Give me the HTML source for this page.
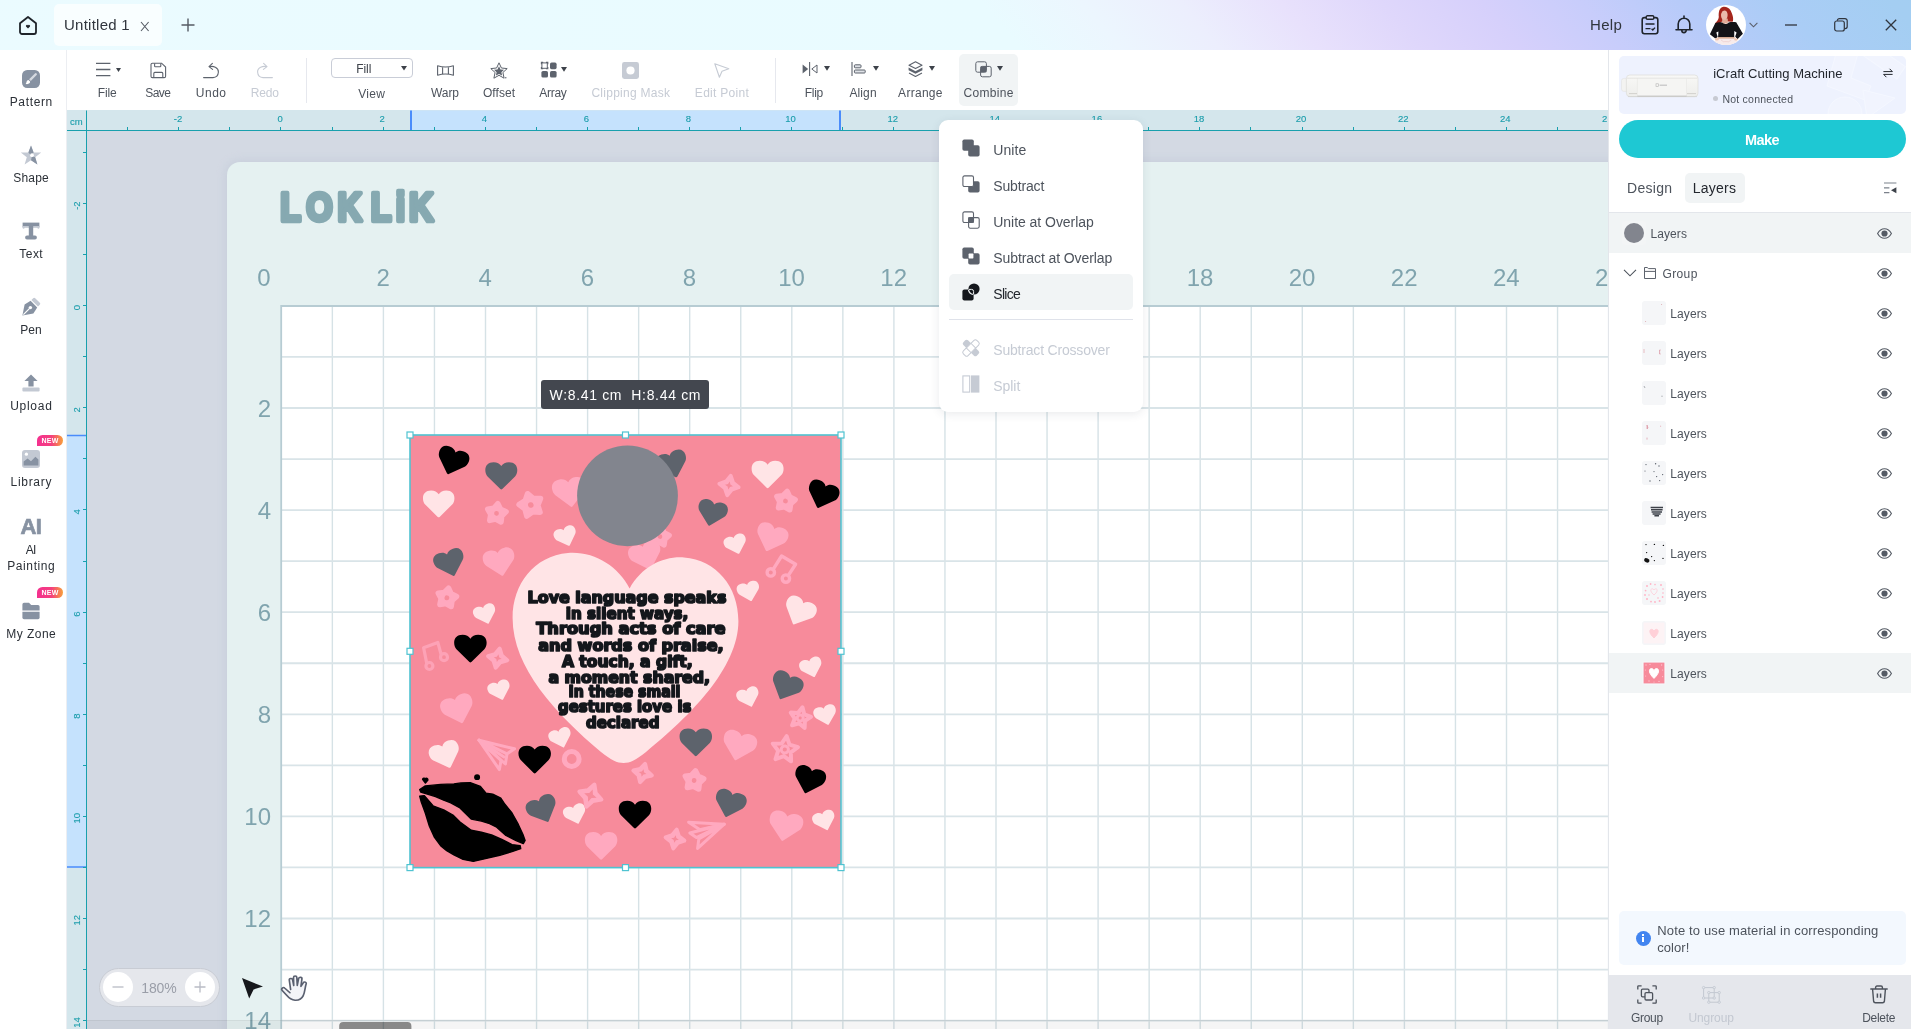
<!DOCTYPE html>
<html lang="en">
<head>
<meta charset="utf-8">
<title>Untitled 1</title>
<style>
*{box-sizing:border-box;margin:0;padding:0}
html,body{width:1911px;height:1029px;overflow:hidden;background:#fff}
body{font-family:"Liberation Sans","DejaVu Sans",sans-serif;color:#4a5059;font-size:13px;position:relative}
#app{position:absolute;left:0;top:0;width:1911px;height:1029px;will-change:transform}
.abs{position:absolute}
svg{display:block;overflow:visible}
/* title bar */
#titlebar{position:absolute;left:0;top:0;width:1911px;height:50px;overflow:hidden;background:#ebfbff}
#tbg{position:absolute;left:-60px;top:0;width:2031px;height:50px;transform:skewX(40deg);background:linear-gradient(90deg,#ebfbff 0px,#e9fbff 1060px,#ecf6fe 1160px,#eceefd 1260px,#e8e1fc 1360px,#dfd7fb 1460px,#d6d0fb 1560px,#c8cdfb 1660px,#b7cbf9 1760px,#aacdf6 1860px,#a4cef2 1971px,#a3cef2 2031px)}
#tab{position:absolute;left:54px;top:4px;width:108px;height:42px;border-radius:5px;background:#f9feff}
.tt{position:absolute;white-space:nowrap;line-height:1}
/* sidebar */
#sidebar{position:absolute;left:0;top:50px;width:67px;height:979px;background:#fff;border-right:1px solid #eceef2}
.sb{position:absolute;left:0;width:62px;text-align:center;font-size:13px;letter-spacing:.45px;color:#2a2f36;line-height:16px;white-space:nowrap}
.new{position:absolute;left:37px;width:26px;height:11px;border-radius:6px 6px 6px 0;background:linear-gradient(90deg,#f4308f 0%,#f4407e 55%,#f7a03a 100%);color:#fff;font-size:7px;font-weight:bold;line-height:11px;text-align:center;letter-spacing:.2px}
/* toolbar */
#toolbar{position:absolute;left:67px;top:50px;width:1541px;height:60px;background:#fff}
.tl{position:absolute;top:85px;transform:translateX(-50%);font-size:13px;line-height:16px;color:#4d535c;white-space:nowrap;letter-spacing:.1px}
.tl.dis{color:#c6cbd4}
.sep{position:absolute;top:58px;width:1px;height:45px;background:#e6e8ee}
/* canvas */
#canvas{position:absolute;left:67px;top:110px;width:1541px;height:919px;background:#d3d9e3;overflow:hidden}
/* right panel */
#panel{position:absolute;left:1608px;top:50px;width:303px;height:979px;background:#fff;border-left:1px solid #e3e6eb}
.row{position:absolute;left:1609px;width:302px;height:40px}
.row.sel{background:#f1f4f5}
.rl{position:absolute;font-size:13px;line-height:16px;color:#4d535c;white-space:nowrap;letter-spacing:.1px}
.thumb{position:absolute;width:24px;height:24px;border-radius:3px;background:#f5f6f8;overflow:hidden}
/* menu */
#menu{position:absolute;left:939px;top:120px;width:204px;height:292px;border-radius:9px;background:#fff;box-shadow:0 2px 10px rgba(40,50,70,.10)}
.mi{position:absolute;left:54px;font-size:14px;line-height:18px;color:#4d535c;white-space:nowrap;letter-spacing:.1px}
.mi.dis{color:#c9cdd6}
</style>
</head>
<body>

<div id="app">
<div id="titlebar">
  <div id="tbg"></div>
  <svg class="abs" style="left:18px;top:15px" width="20" height="21" viewBox="0 0 20 21"><path d="M2 8.2 L10 2 L18 8.2 V17 a2 2 0 0 1 -2 2 H4 a2 2 0 0 1 -2 -2 Z" fill="none" stroke="#1f242b" stroke-width="1.8" stroke-linejoin="round"/><path d="M10 13.4 l-2 -2 a1.1 1.1 0 0 1 2 -1 a1.1 1.1 0 0 1 2 1 Z" fill="#1f242b"/></svg>
  <div id="tab"></div>
  <div class="tt" style="left:64px;top:17px;font-size:15px;color:#30353d;letter-spacing:.25px">Untitled 1</div>
  <svg class="abs" style="left:139.5px;top:20.5px" width="10" height="11" viewBox="0 0 10 11"><path d="M1 1 L8.6 10 M8.6 1 L1 10" stroke="#555b64" stroke-width="1.1" fill="none"/></svg>
  <svg class="abs" style="left:181px;top:18px" width="14" height="14" viewBox="0 0 14 14"><path d="M7 0.5 V13.5 M0.5 7 H13.5" stroke="#555b64" stroke-width="1.4" fill="none"/></svg>
  <div class="tt" style="left:1590px;top:17px;font-size:15px;color:#30353d;letter-spacing:.3px">Help</div>
  <svg class="abs" style="left:1641px;top:15px" width="18" height="20" viewBox="0 0 18 20"><rect x="1.2" y="2.6" width="15.6" height="16.2" rx="2.2" fill="none" stroke="#1f242b" stroke-width="1.6"/><rect x="5.2" y="0.8" width="7.6" height="3.4" rx="1.2" fill="#cfd3fa" stroke="#1f242b" stroke-width="1.4"/><path d="M4.5 9 H13.5 M4.5 13.6 H9.5 M10.6 13.8 l1.2 1.2 l2.2 -2.4" fill="none" stroke="#1f242b" stroke-width="1.4"/></svg>
  <svg class="abs" style="left:1675px;top:15px" width="18" height="20" viewBox="0 0 18 20"><path d="M9 1 V2.6 M3.2 14.6 V9 a5.8 5.8 0 0 1 11.6 0 V14.6 M1 14.8 H17 M6.8 15.2 a2.2 2.4 0 0 0 4.4 0" fill="none" stroke="#1f242b" stroke-width="1.6" stroke-linecap="round" stroke-linejoin="round"/></svg>
  <svg class="abs" style="left:1706px;top:5px" width="40" height="40" viewBox="0 0 40 40"><defs><clipPath id="avc"><circle cx="20" cy="20" r="20"/></clipPath></defs><circle cx="20" cy="20" r="20" fill="#fff"/><g clip-path="url(#avc)"><path d="M17.5 1.8 C13 2.4 12.4 8 12.8 12 C12.6 15 10.6 17 8.7 18.6 L12 19.8 L16 16.4 L22 16.4 L26.6 16.8 C28 14 26.6 9 24.6 5.4 C23 2.8 20.5 1.6 17.5 1.8Z" fill="#a5261c"/><rect x="16.2" y="13.6" width="5.6" height="5" fill="#e3ac98"/><ellipse cx="18.3" cy="10" rx="3.3" ry="4.7" fill="#ebbcab"/><path d="M14.8 9.6 C14.6 5 16.6 3 19 3.2 C22.4 3.6 23.6 7 23 11.4 C22.2 7.6 20.6 5.6 18.8 5.2 C16.6 5.4 15.4 7.2 14.8 9.6Z" fill="#a5261c"/><path d="M9.2 18.2 C12 17 14.5 17.2 16 17.6 C18 19.4 21 19.4 22.6 17.4 C25 16.8 28 16.8 30.2 17.2 L36.9 28.7 L31.4 34.2 L29.2 31.6 L30.6 27.4 L28.3 26 L28.2 32.2 L12.1 32.2 L12.4 26.5 L10.3 27.6 L11.6 31.8 L9.6 33.8 L3.9 29.2Z" fill="#131317"/><rect x="9" y="33.4" width="22" height="7" fill="#f7ebeb"/><rect x="11.6" y="32.1" width="17" height="1.5" fill="#d8a78c"/><ellipse cx="10.9" cy="34.3" rx="1.7" ry="1.2" fill="#eec4b0"/><ellipse cx="30" cy="34.4" rx="1.7" ry="1.2" fill="#eec4b0"/><path d="M15 35 q2.5 2.6 5 1.6 q2.6 1 5.2 -1.4" fill="none" stroke="#eccfd0" stroke-width=".8"/></g></svg>
  <svg class="abs" style="left:1749px;top:22px" width="9" height="6" viewBox="0 0 9 6"><path d="M0.6 0.8 L4.5 4.8 L8.4 0.8" fill="none" stroke="#5a5f6b" stroke-width="1.1"/></svg>
  <svg class="abs" style="left:1785px;top:24px" width="12" height="2" viewBox="0 0 12 2"><path d="M0 1 H12" stroke="#30353d" stroke-width="1.3"/></svg>
  <svg class="abs" style="left:1834px;top:18px" width="14" height="14" viewBox="0 0 14 14"><rect x="0.7" y="3" width="9.6" height="10" rx="2" fill="none" stroke="#30353d" stroke-width="1.2"/><path d="M3.4 2.8 V2.6 a2 2 0 0 1 2 -2 H11 a2.2 2.2 0 0 1 2.2 2.2 V8.6 a2 2 0 0 1 -2 2 H10.6" fill="none" stroke="#30353d" stroke-width="1.2"/></svg>
  <svg class="abs" style="left:1885px;top:19px" width="12" height="12" viewBox="0 0 12 12"><path d="M0.8 0.8 L11.2 11.2 M11.2 0.8 L0.8 11.2" stroke="#30353d" stroke-width="1.3" fill="none"/></svg>
</div>

<svg class="abs" style="left:67px;top:110px" width="1541" height="919" viewBox="67 110 1541 919" font-family="'Liberation Sans','DejaVu Sans',sans-serif">
<defs><clipPath id="cv"><rect x="67" y="110" width="1541" height="919"/></clipPath><filter id="ms" x="-5%" y="-5%" width="110%" height="110%"><feGaussianBlur stdDeviation="5"/></filter></defs>
<g clip-path="url(#cv)">
<rect x="67" y="110" width="1541" height="919" fill="#d3d9e3"/>
<rect x="225" y="160" width="1500" height="1000" rx="14" fill="#b9c1d2" opacity=".42" filter="url(#ms)"/>
<rect x="227" y="162" width="1500" height="1000" rx="13" fill="#e5f1f1"/>
<text transform="scale(1 1.18)" x="280.2 306.3 337.5 370.8 395.8 409" y="187.6" font-size="34" font-weight="bold" fill="#86a9b1" stroke="#86a9b1" stroke-width="4" stroke-linejoin="round">LOKLiK</text>
<rect x="281" y="305.5" width="1400" height="800" fill="#fff"/>
<path d="M332.35 306V1040M383.40 306V1040M434.45 306V1040M485.50 306V1040M536.55 306V1040M587.60 306V1040M638.65 306V1040M689.70 306V1040M740.75 306V1040M791.80 306V1040M842.85 306V1040M893.90 306V1040M944.95 306V1040M996.00 306V1040M1047.05 306V1040M1098.10 306V1040M1149.15 306V1040M1200.20 306V1040M1251.25 306V1040M1302.30 306V1040M1353.35 306V1040M1404.40 306V1040M1455.45 306V1040M1506.50 306V1040M1557.55 306V1040M1608.60 306V1040M1659.65 306V1040" stroke="#d6e2e6" stroke-width="1.4" fill="none"/>
<path d="M281 356.95H1700M281 408.00H1700M281 459.05H1700M281 510.10H1700M281 561.15H1700M281 612.20H1700M281 663.25H1700M281 714.30H1700M281 765.35H1700M281 816.40H1700M281 867.45H1700M281 918.50H1700M281 969.55H1700M281 1020.60H1700" stroke="#d9e4e8" stroke-width="1.8" fill="none"/>
<path d="M281.2 1040V306H1700" stroke="#b7ccd3" stroke-width="1.8" fill="none"/>
<g font-size="24" fill="#80a4ae">
<text x="264" y="285.6" text-anchor="middle">0</text>
<text x="383.2" y="285.6" text-anchor="middle">2</text>
<text x="485.3" y="285.6" text-anchor="middle">4</text>
<text x="587.4" y="285.6" text-anchor="middle">6</text>
<text x="689.5" y="285.6" text-anchor="middle">8</text>
<text x="791.6" y="285.6" text-anchor="middle">10</text>
<text x="893.7" y="285.6" text-anchor="middle">12</text>
<text x="995.8" y="285.6" text-anchor="middle">14</text>
<text x="1097.9" y="285.6" text-anchor="middle">16</text>
<text x="1200.0" y="285.6" text-anchor="middle">18</text>
<text x="1302.1" y="285.6" text-anchor="middle">20</text>
<text x="1404.2" y="285.6" text-anchor="middle">22</text>
<text x="1506.3" y="285.6" text-anchor="middle">24</text>
<text x="1608.4" y="285.6" text-anchor="middle">26</text>
<text x="271" y="416.8" text-anchor="end">2</text>
<text x="271" y="518.9" text-anchor="end">4</text>
<text x="271" y="621.0" text-anchor="end">6</text>
<text x="271" y="723.1" text-anchor="end">8</text>
<text x="271" y="825.2" text-anchor="end">10</text>
<text x="271" y="927.3" text-anchor="end">12</text>
<text x="271" y="1029.4" text-anchor="end">14</text>
</g>
<rect x="410" y="435" width="431" height="432.5" fill="#f78b9b"/>
<path transform="translate(569.7 492.7) rotate(-8) scale(33.92) translate(0 -.43)" d="M0 .12C.05 .04 .13 0 .24 0C.41 0 .5 .1 .5 .245C.5 .335 .47 .405 .43 .445L.03 .84Q0 .87 -.03 .84L-.43 .445C-.47 .405 -.5 .335 -.5 .245C-.5 .1 -.41 0 -.24 0C-.13 0 -.05 .04 0 .12Z" fill="#ffa9bf"/>
<path transform="translate(672.6 464.9) rotate(-18) scale(30.74) translate(0 -.43)" d="M0 .12C.05 .04 .13 0 .24 0C.41 0 .5 .1 .5 .245C.5 .335 .47 .405 .43 .445L.03 .84Q0 .87 -.03 .84L-.43 .445C-.47 .405 -.5 .335 -.5 .245C-.5 .1 -.41 0 -.24 0C-.13 0 -.05 .04 0 .12Z" fill="#5d636c"/>
<g transform="translate(660.0 536.6) rotate(10)"><polygon points="0.00,-9.30 3.28,-4.51 8.84,-2.87 5.31,1.72 5.47,7.52 0.00,5.58 -5.47,7.52 -5.31,1.72 -8.84,-2.87 -3.28,-4.51" fill="#ffa9bf" stroke="#ffa9bf" stroke-width="5.4" stroke-linejoin="round"/><circle r="2.3" fill="#f78b9b"/></g>
<path transform="translate(646.0 556.5) rotate(-18) scale(32.86) translate(0 -.43)" d="M0 .12C.05 .04 .13 0 .24 0C.41 0 .5 .1 .5 .245C.5 .335 .47 .405 .43 .445L.03 .84Q0 .87 -.03 .84L-.43 .445C-.47 .405 -.5 .335 -.5 .245C-.5 .1 -.41 0 -.24 0C-.13 0 -.05 .04 0 .12Z" fill="#ffa9bf"/>
<path d="M629.6 588.4 C 642 566 664 556 684 557.4 C 716 560 738.4 586 738.4 621 C 738.4 668 690 716 646 752 C 636 760 630 763 623.6 763 C 617 763 611 760 601 752 C 556 714 512.6 668 512.6 618 C 512.6 584 534 556 568 553 C 594 551 618 566 629.6 588.4 Z" fill="#ffe4e6"/>
<circle cx="627.5" cy="495.8" r="50.4" fill="#82858e"/>
<path transform="translate(452.2 461.6) rotate(20) scale(31.27) translate(0 -.43)" d="M0 .12C.05 .04 .13 0 .24 0C.41 0 .5 .1 .5 .245C.5 .335 .47 .405 .43 .445L.03 .84Q0 .87 -.03 .84L-.43 .445C-.47 .405 -.5 .335 -.5 .245C-.5 .1 -.41 0 -.24 0C-.13 0 -.05 .04 0 .12Z" fill="#000"/>
<path transform="translate(501.3 476.0) rotate(0) scale(31.97) translate(0 -.43)" d="M0 .12C.05 .04 .13 0 .24 0C.41 0 .5 .1 .5 .245C.5 .335 .47 .405 .43 .445L.03 .84Q0 .87 -.03 .84L-.43 .445C-.47 .405 -.5 .335 -.5 .245C-.5 .1 -.41 0 -.24 0C-.13 0 -.05 .04 0 .12Z" fill="#5d636c"/>
<path transform="translate(438.7 504.0) rotate(0) scale(31.46) translate(0 -.43)" d="M0 .12C.05 .04 .13 0 .24 0C.41 0 .5 .1 .5 .245C.5 .335 .47 .405 .43 .445L.03 .84Q0 .87 -.03 .84L-.43 .445C-.47 .405 -.5 .335 -.5 .245C-.5 .1 -.41 0 -.24 0C-.13 0 -.05 .04 0 .12Z" fill="#ffe4e6"/>
<path transform="translate(566.0 536.8) rotate(-20) scale(22.58) translate(0 -.43)" d="M0 .12C.05 .04 .13 0 .24 0C.41 0 .5 .1 .5 .245C.5 .335 .47 .405 .43 .445L.03 .84Q0 .87 -.03 .84L-.43 .445C-.47 .405 -.5 .335 -.5 .245C-.5 .1 -.41 0 -.24 0C-.13 0 -.05 .04 0 .12Z" fill="#ffe4e6"/>
<path transform="translate(767.6 474.6) rotate(0) scale(31.97) translate(0 -.43)" d="M0 .12C.05 .04 .13 0 .24 0C.41 0 .5 .1 .5 .245C.5 .335 .47 .405 .43 .445L.03 .84Q0 .87 -.03 .84L-.43 .445C-.47 .405 -.5 .335 -.5 .245C-.5 .1 -.41 0 -.24 0C-.13 0 -.05 .04 0 .12Z" fill="#ffe4e6"/>
<path transform="translate(822.3 495.5) rotate(20) scale(31.27) translate(0 -.43)" d="M0 .12C.05 .04 .13 0 .24 0C.41 0 .5 .1 .5 .245C.5 .335 .47 .405 .43 .445L.03 .84Q0 .87 -.03 .84L-.43 .445C-.47 .405 -.5 .335 -.5 .245C-.5 .1 -.41 0 -.24 0C-.13 0 -.05 .04 0 .12Z" fill="#000"/>
<path transform="translate(711.9 513.4) rotate(14) scale(29.68) translate(0 -.43)" d="M0 .12C.05 .04 .13 0 .24 0C.41 0 .5 .1 .5 .245C.5 .335 .47 .405 .43 .445L.03 .84Q0 .87 -.03 .84L-.43 .445C-.47 .405 -.5 .335 -.5 .245C-.5 .1 -.41 0 -.24 0C-.13 0 -.05 .04 0 .12Z" fill="#5d636c"/>
<path transform="translate(771.0 538.3) rotate(20) scale(31.80) translate(0 -.43)" d="M0 .12C.05 .04 .13 0 .24 0C.41 0 .5 .1 .5 .245C.5 .335 .47 .405 .43 .445L.03 .84Q0 .87 -.03 .84L-.43 .445C-.47 .405 -.5 .335 -.5 .245C-.5 .1 -.41 0 -.24 0C-.13 0 -.05 .04 0 .12Z" fill="#ffa9bf"/>
<path transform="translate(735.9 544.7) rotate(-18) scale(22.58) translate(0 -.43)" d="M0 .12C.05 .04 .13 0 .24 0C.41 0 .5 .1 .5 .245C.5 .335 .47 .405 .43 .445L.03 .84Q0 .87 -.03 .84L-.43 .445C-.47 .405 -.5 .335 -.5 .245C-.5 .1 -.41 0 -.24 0C-.13 0 -.05 .04 0 .12Z" fill="#ffe4e6"/>
<path transform="translate(450.0 563.5) rotate(-18) scale(30.74) translate(0 -.43)" d="M0 .12C.05 .04 .13 0 .24 0C.41 0 .5 .1 .5 .245C.5 .335 .47 .405 .43 .445L.03 .84Q0 .87 -.03 .84L-.43 .445C-.47 .405 -.5 .335 -.5 .245C-.5 .1 -.41 0 -.24 0C-.13 0 -.05 .04 0 .12Z" fill="#5d636c"/>
<path transform="translate(499.7 562.6) rotate(-12) scale(31.80) translate(0 -.43)" d="M0 .12C.05 .04 .13 0 .24 0C.41 0 .5 .1 .5 .245C.5 .335 .47 .405 .43 .445L.03 .84Q0 .87 -.03 .84L-.43 .445C-.47 .405 -.5 .335 -.5 .245C-.5 .1 -.41 0 -.24 0C-.13 0 -.05 .04 0 .12Z" fill="#ffa9bf"/>
<path transform="translate(485.3 614.6) rotate(-18) scale(22.58) translate(0 -.43)" d="M0 .12C.05 .04 .13 0 .24 0C.41 0 .5 .1 .5 .245C.5 .335 .47 .405 .43 .445L.03 .84Q0 .87 -.03 .84L-.43 .445C-.47 .405 -.5 .335 -.5 .245C-.5 .1 -.41 0 -.24 0C-.13 0 -.05 .04 0 .12Z" fill="#ffe4e6"/>
<path transform="translate(748.9 591.8) rotate(-15) scale(22.58) translate(0 -.43)" d="M0 .12C.05 .04 .13 0 .24 0C.41 0 .5 .1 .5 .245C.5 .335 .47 .405 .43 .445L.03 .84Q0 .87 -.03 .84L-.43 .445C-.47 .405 -.5 .335 -.5 .245C-.5 .1 -.41 0 -.24 0C-.13 0 -.05 .04 0 .12Z" fill="#ffe4e6"/>
<path transform="translate(799.1 612.1) rotate(25) scale(31.80) translate(0 -.43)" d="M0 .12C.05 .04 .13 0 .24 0C.41 0 .5 .1 .5 .245C.5 .335 .47 .405 .43 .445L.03 .84Q0 .87 -.03 .84L-.43 .445C-.47 .405 -.5 .335 -.5 .245C-.5 .1 -.41 0 -.24 0C-.13 0 -.05 .04 0 .12Z" fill="#ffe4e6"/>
<path transform="translate(470.4 648.8) rotate(0) scale(32.48) translate(0 -.43)" d="M0 .12C.05 .04 .13 0 .24 0C.41 0 .5 .1 .5 .245C.5 .335 .47 .405 .43 .445L.03 .84Q0 .87 -.03 .84L-.43 .445C-.47 .405 -.5 .335 -.5 .245C-.5 .1 -.41 0 -.24 0C-.13 0 -.05 .04 0 .12Z" fill="#000"/>
<path transform="translate(499.7 690.7) rotate(-18) scale(22.58) translate(0 -.43)" d="M0 .12C.05 .04 .13 0 .24 0C.41 0 .5 .1 .5 .245C.5 .335 .47 .405 .43 .445L.03 .84Q0 .87 -.03 .84L-.43 .445C-.47 .405 -.5 .335 -.5 .245C-.5 .1 -.41 0 -.24 0C-.13 0 -.05 .04 0 .12Z" fill="#ffe4e6"/>
<path transform="translate(458.1 709.8) rotate(-18) scale(32.86) translate(0 -.43)" d="M0 .12C.05 .04 .13 0 .24 0C.41 0 .5 .1 .5 .245C.5 .335 .47 .405 .43 .445L.03 .84Q0 .87 -.03 .84L-.43 .445C-.47 .405 -.5 .335 -.5 .245C-.5 .1 -.41 0 -.24 0C-.13 0 -.05 .04 0 .12Z" fill="#ffa9bf"/>
<path transform="translate(445.6 755.5) rotate(-20) scale(30.74) translate(0 -.43)" d="M0 .12C.05 .04 .13 0 .24 0C.41 0 .5 .1 .5 .245C.5 .335 .47 .405 .43 .445L.03 .84Q0 .87 -.03 .84L-.43 .445C-.47 .405 -.5 .335 -.5 .245C-.5 .1 -.41 0 -.24 0C-.13 0 -.05 .04 0 .12Z" fill="#ffe4e6"/>
<path transform="translate(534.7 759.6) rotate(0) scale(32.48) translate(0 -.43)" d="M0 .12C.05 .04 .13 0 .24 0C.41 0 .5 .1 .5 .245C.5 .335 .47 .405 .43 .445L.03 .84Q0 .87 -.03 .84L-.43 .445C-.47 .405 -.5 .335 -.5 .245C-.5 .1 -.41 0 -.24 0C-.13 0 -.05 .04 0 .12Z" fill="#000"/>
<path transform="translate(560.7 738.3) rotate(-18) scale(22.58) translate(0 -.43)" d="M0 .12C.05 .04 .13 0 .24 0C.41 0 .5 .1 .5 .245C.5 .335 .47 .405 .43 .445L.03 .84Q0 .87 -.03 .84L-.43 .445C-.47 .405 -.5 .335 -.5 .245C-.5 .1 -.41 0 -.24 0C-.13 0 -.05 .04 0 .12Z" fill="#ffe4e6"/>
<path transform="translate(695.8 742.4) rotate(0) scale(32.48) translate(0 -.43)" d="M0 .12C.05 .04 .13 0 .24 0C.41 0 .5 .1 .5 .245C.5 .335 .47 .405 .43 .445L.03 .84Q0 .87 -.03 .84L-.43 .445C-.47 .405 -.5 .335 -.5 .245C-.5 .1 -.41 0 -.24 0C-.13 0 -.05 .04 0 .12Z" fill="#5d636c"/>
<path transform="translate(738.9 746.4) rotate(15) scale(33.92) translate(0 -.43)" d="M0 .12C.05 .04 .13 0 .24 0C.41 0 .5 .1 .5 .245C.5 .335 .47 .405 .43 .445L.03 .84Q0 .87 -.03 .84L-.43 .445C-.47 .405 -.5 .335 -.5 .245C-.5 .1 -.41 0 -.24 0C-.13 0 -.05 .04 0 .12Z" fill="#ffa9bf"/>
<path transform="translate(809.1 780.5) rotate(17) scale(31.27) translate(0 -.43)" d="M0 .12C.05 .04 .13 0 .24 0C.41 0 .5 .1 .5 .245C.5 .335 .47 .405 .43 .445L.03 .84Q0 .87 -.03 .84L-.43 .445C-.47 .405 -.5 .335 -.5 .245C-.5 .1 -.41 0 -.24 0C-.13 0 -.05 .04 0 .12Z" fill="#000"/>
<path transform="translate(542.8 809.9) rotate(-24) scale(30.74) translate(0 -.43)" d="M0 .12C.05 .04 .13 0 .24 0C.41 0 .5 .1 .5 .245C.5 .335 .47 .405 .43 .445L.03 .84Q0 .87 -.03 .84L-.43 .445C-.47 .405 -.5 .335 -.5 .245C-.5 .1 -.41 0 -.24 0C-.13 0 -.05 .04 0 .12Z" fill="#5d636c"/>
<path transform="translate(575.3 814.6) rotate(-18) scale(22.58) translate(0 -.43)" d="M0 .12C.05 .04 .13 0 .24 0C.41 0 .5 .1 .5 .245C.5 .335 .47 .405 .43 .445L.03 .84Q0 .87 -.03 .84L-.43 .445C-.47 .405 -.5 .335 -.5 .245C-.5 .1 -.41 0 -.24 0C-.13 0 -.05 .04 0 .12Z" fill="#ffe4e6"/>
<path transform="translate(635.0 814.7) rotate(0) scale(32.48) translate(0 -.43)" d="M0 .12C.05 .04 .13 0 .24 0C.41 0 .5 .1 .5 .245C.5 .335 .47 .405 .43 .445L.03 .84Q0 .87 -.03 .84L-.43 .445C-.47 .405 -.5 .335 -.5 .245C-.5 .1 -.41 0 -.24 0C-.13 0 -.05 .04 0 .12Z" fill="#000"/>
<path transform="translate(729.7 804.3) rotate(17) scale(31.27) translate(0 -.43)" d="M0 .12C.05 .04 .13 0 .24 0C.41 0 .5 .1 .5 .245C.5 .335 .47 .405 .43 .445L.03 .84Q0 .87 -.03 .84L-.43 .445C-.47 .405 -.5 .335 -.5 .245C-.5 .1 -.41 0 -.24 0C-.13 0 -.05 .04 0 .12Z" fill="#5d636c"/>
<path transform="translate(785.2 826.8) rotate(12) scale(33.92) translate(0 -.43)" d="M0 .12C.05 .04 .13 0 .24 0C.41 0 .5 .1 .5 .245C.5 .335 .47 .405 .43 .445L.03 .84Q0 .87 -.03 .84L-.43 .445C-.47 .405 -.5 .335 -.5 .245C-.5 .1 -.41 0 -.24 0C-.13 0 -.05 .04 0 .12Z" fill="#ffa9bf"/>
<path transform="translate(824.5 821.0) rotate(-18) scale(22.58) translate(0 -.43)" d="M0 .12C.05 .04 .13 0 .24 0C.41 0 .5 .1 .5 .245C.5 .335 .47 .405 .43 .445L.03 .84Q0 .87 -.03 .84L-.43 .445C-.47 .405 -.5 .335 -.5 .245C-.5 .1 -.41 0 -.24 0C-.13 0 -.05 .04 0 .12Z" fill="#ffe4e6"/>
<path transform="translate(601.1 846.0) rotate(0) scale(32.48) translate(0 -.43)" d="M0 .12C.05 .04 .13 0 .24 0C.41 0 .5 .1 .5 .245C.5 .335 .47 .405 .43 .445L.03 .84Q0 .87 -.03 .84L-.43 .445C-.47 .405 -.5 .335 -.5 .245C-.5 .1 -.41 0 -.24 0C-.13 0 -.05 .04 0 .12Z" fill="#ffa9bf"/>
<path transform="translate(785.9 686.8) rotate(25) scale(31.80) translate(0 -.43)" d="M0 .12C.05 .04 .13 0 .24 0C.41 0 .5 .1 .5 .245C.5 .335 .47 .405 .43 .445L.03 .84Q0 .87 -.03 .84L-.43 .445C-.47 .405 -.5 .335 -.5 .245C-.5 .1 -.41 0 -.24 0C-.13 0 -.05 .04 0 .12Z" fill="#5d636c"/>
<path transform="translate(811.5 667.9) rotate(-18) scale(22.58) translate(0 -.43)" d="M0 .12C.05 .04 .13 0 .24 0C.41 0 .5 .1 .5 .245C.5 .335 .47 .405 .43 .445L.03 .84Q0 .87 -.03 .84L-.43 .445C-.47 .405 -.5 .335 -.5 .245C-.5 .1 -.41 0 -.24 0C-.13 0 -.05 .04 0 .12Z" fill="#ffe4e6"/>
<path transform="translate(748.6 697.6) rotate(-18) scale(22.58) translate(0 -.43)" d="M0 .12C.05 .04 .13 0 .24 0C.41 0 .5 .1 .5 .245C.5 .335 .47 .405 .43 .445L.03 .84Q0 .87 -.03 .84L-.43 .445C-.47 .405 -.5 .335 -.5 .245C-.5 .1 -.41 0 -.24 0C-.13 0 -.05 .04 0 .12Z" fill="#ffe4e6"/>
<path transform="translate(825.7 715.5) rotate(-16) scale(22.79) translate(0 -.43)" d="M0 .12C.05 .04 .13 0 .24 0C.41 0 .5 .1 .5 .245C.5 .335 .47 .405 .43 .445L.03 .84Q0 .87 -.03 .84L-.43 .445C-.47 .405 -.5 .335 -.5 .245C-.5 .1 -.41 0 -.24 0C-.13 0 -.05 .04 0 .12Z" fill="#ffe4e6"/>
<g transform="translate(496.5 513.4) rotate(8)"><polygon points="0.00,-9.80 3.46,-4.76 9.32,-3.03 5.59,1.82 5.76,7.93 0.00,5.88 -5.76,7.93 -5.59,1.82 -9.32,-3.03 -3.46,-4.76" fill="#ffa9bf" stroke="#ffa9bf" stroke-width="5.4" stroke-linejoin="round"/><circle r="2.4" fill="#f78b9b"/></g>
<g transform="translate(530.8 505.0) rotate(-16)"><polygon points="0.00,-11.80 4.16,-5.73 11.22,-3.65 6.73,2.19 6.94,9.55 0.00,7.08 -6.94,9.55 -6.73,2.19 -11.22,-3.65 -4.16,-5.73" fill="#ffa9bf" stroke="#ffa9bf" stroke-width="5.4" stroke-linejoin="round"/><circle r="2.8" fill="#f78b9b"/></g>
<g transform="translate(785.5 501.0) rotate(10)"><polygon points="0.00,-9.80 3.46,-4.76 9.32,-3.03 5.59,1.82 5.76,7.93 0.00,5.88 -5.76,7.93 -5.59,1.82 -9.32,-3.03 -3.46,-4.76" fill="#ffa9bf" stroke="#ffa9bf" stroke-width="5.4" stroke-linejoin="round"/><circle r="2.4" fill="#f78b9b"/></g>
<g transform="translate(446.9 597.8) rotate(10)"><polygon points="0.00,-9.80 3.46,-4.76 9.32,-3.03 5.59,1.82 5.76,7.93 0.00,5.88 -5.76,7.93 -5.59,1.82 -9.32,-3.03 -3.46,-4.76" fill="#ffa9bf" stroke="#ffa9bf" stroke-width="5.4" stroke-linejoin="round"/><circle r="2.4" fill="#f78b9b"/></g>
<g transform="translate(694.1 780.5) rotate(8)"><polygon points="0.00,-9.80 3.46,-4.76 9.32,-3.03 5.59,1.82 5.76,7.93 0.00,5.88 -5.76,7.93 -5.59,1.82 -9.32,-3.03 -3.46,-4.76" fill="#ffa9bf" stroke="#ffa9bf" stroke-width="5.4" stroke-linejoin="round"/><circle r="2.4" fill="#f78b9b"/></g>
<g transform="translate(729.0 485.5) rotate(10)"><polygon points="0.00,-9.75 3.45,-3.45 9.75,0.00 3.45,3.45 0.00,9.75 -3.45,3.45 -9.75,0.00 -3.45,-3.45" fill="#ffa9bf" stroke="#ffa9bf" stroke-width="4" stroke-linejoin="round"/><polygon points="0.00,-4.00 1.19,-1.19 4.00,0.00 1.19,1.19 0.00,4.00 -1.19,1.19 -4.00,0.00 -1.19,-1.19" fill="#f78b9b"/></g>
<g transform="translate(497.7 658.2) rotate(12)"><polygon points="0.00,-9.75 3.45,-3.45 9.75,0.00 3.45,3.45 0.00,9.75 -3.45,3.45 -9.75,0.00 -3.45,-3.45" fill="#ffa9bf" stroke="#ffa9bf" stroke-width="4" stroke-linejoin="round"/><polygon points="0.00,-4.00 1.19,-1.19 4.00,0.00 1.19,1.19 0.00,4.00 -1.19,1.19 -4.00,0.00 -1.19,-1.19" fill="#f78b9b"/></g>
<g transform="translate(642.6 773.0) rotate(15)"><polygon points="0.00,-9.50 3.36,-3.36 9.50,0.00 3.36,3.36 0.00,9.50 -3.36,3.36 -9.50,0.00 -3.36,-3.36" fill="#ffa9bf" stroke="#ffa9bf" stroke-width="4" stroke-linejoin="round"/><polygon points="0.00,-3.91 1.16,-1.16 3.91,0.00 1.16,1.16 0.00,3.91 -1.16,1.16 -3.91,0.00 -1.16,-1.16" fill="#f78b9b"/></g>
<g transform="translate(590.4 795.6) rotate(20)"><polygon points="0.00,-11.75 4.15,-4.15 11.75,0.00 4.15,4.15 0.00,11.75 -4.15,4.15 -11.75,0.00 -4.15,-4.15" fill="#ffa9bf" stroke="#ffa9bf" stroke-width="4" stroke-linejoin="round"/><polygon points="0.00,-6.60 1.96,-1.96 6.60,0.00 1.96,1.96 0.00,6.60 -1.96,1.96 -6.60,0.00 -1.96,-1.96" fill="#f78b9b"/></g>
<g transform="translate(675.0 839.0) rotate(10)"><polygon points="0.00,-9.50 3.36,-3.36 9.50,0.00 3.36,3.36 0.00,9.50 -3.36,3.36 -9.50,0.00 -3.36,-3.36" fill="#ffa9bf" stroke="#ffa9bf" stroke-width="4" stroke-linejoin="round"/><polygon points="0.00,-3.91 1.16,-1.16 3.91,0.00 1.16,1.16 0.00,3.91 -1.16,1.16 -3.91,0.00 -1.16,-1.16" fill="#f78b9b"/></g>
<g transform="translate(784.8 749.5) rotate(8)"><polygon points="0.00,-13.40 3.94,-5.42 12.74,-4.14 6.37,2.07 7.88,10.84 0.00,6.70 -7.88,10.84 -6.37,2.07 -12.74,-4.14 -3.94,-5.42" fill="none" stroke="#ffa9bf" stroke-width="4" stroke-linejoin="round"/><circle r="3.6" fill="none" stroke="#ffa9bf" stroke-width="3"/></g>
<g transform="translate(800.2 718.0) rotate(12)"><polygon points="0.00,-10.90 3.20,-4.41 10.37,-3.37 5.18,1.68 6.41,8.82 0.00,5.45 -6.41,8.82 -5.18,1.68 -10.37,-3.37 -3.20,-4.41" fill="none" stroke="#ffa9bf" stroke-width="4" stroke-linejoin="round"/><circle r="3.0" fill="none" stroke="#ffa9bf" stroke-width="3"/></g>
<g fill="none" stroke="#ffa9bf" stroke-width="3.4" stroke-linejoin="round" stroke-linecap="round"><path d="M773 569.6 L781.6 556 L795.6 564.2 L788.2 575.6"/><circle cx="770.8" cy="572.4" r="3.7"/><circle cx="785.9" cy="578.6" r="3.7"/></g>
<g fill="none" stroke="#fda2b6" stroke-width="3.2" stroke-linejoin="round" stroke-linecap="round"><path d="M426.6 662.6 L423.6 647.8 L437.8 642.4 L441 654"/><circle cx="429.4" cy="666" r="3.5"/><circle cx="444" cy="657.2" r="3.5"/></g>
<g fill="none" stroke="#ffa9bf" stroke-width="3" stroke-linejoin="round" stroke-linecap="round"><path d="M479 740.2 L514.6 748.8 L507 753.8Z"/><path d="M479 740.2 L499.4 769.6 L501 760.4Z"/><path d="M479 740.2 L505.4 764 L507 753.8"/><path d="M482 742.6 L504 757"/></g>
<g fill="none" stroke="#ffa9bf" stroke-width="3" stroke-linejoin="round" stroke-linecap="round"><path d="M724.2 824.2 L688.6 822.2 L699.6 829.6Z"/><path d="M724.2 824.2 L689.8 833 L696.4 837.6Z"/><path d="M724.2 824.2 L697.6 848.4 L698.8 839Z"/></g>
<circle cx="571.7" cy="759" r="7.4" fill="none" stroke="#ffa9bf" stroke-width="5"/>
<g fill="#000" stroke="#000" stroke-width="1.4" stroke-linejoin="round"><path d="M419.7 789.5 L425.3 785.9 L440.6 784.4 L453.9 783.9 L461.0 782.9 L470.2 782.6 L480.4 786.4 L486.0 793.1 L492.7 794.1 L500.8 798.2 L504.9 804.3 L512.0 813.0 L518.2 824.2 L523.3 835.4 L525.1 840.5 L523.3 843.6 L516.1 840.5 L505.9 835.4 L496.7 827.2 L489.6 823.7 L481.4 821.1 L471.2 819.1 L465.1 813.0 L460.0 807.9 L450.8 802.8 L443.7 800.2 L435.5 796.6 L427.3 794.1 L420.7 792.0Z"/><path d="M419.7 796.1 L424.3 795.6 L433.0 805.8 L443.7 809.9 L452.9 815.0 L460.0 822.1 L471.2 830.3 L481.4 832.3 L491.6 834.9 L501.8 839.5 L512.0 844.6 L520.2 845.6 L520.7 848.7 L512.0 851.7 L499.8 855.3 L486.5 858.4 L473.3 861.4 L463.1 859.4 L453.9 854.8 L446.7 850.7 L440.6 845.6 L434.5 837.4 L429.4 826.2 L425.3 813.0 L421.2 801.7Z"/><path d="M422.6 779.4 a1.5 1.5 0 0 1 2.7 -.6 a1.5 1.5 0 0 1 2.6 1.2 L425.4 783Z"/><ellipse cx="477.1" cy="777.2" rx="2.3" ry="2.2"/></g>
<g font-family="'DejaVu Sans','Liberation Sans',sans-serif" font-weight="bold" font-size="15.5" opacity=".995" fill="#14171c" stroke="#14171c" stroke-width="1.7" stroke-linejoin="round" stroke-linecap="round">
<text x="527.6" y="602.7" textLength="198.8" lengthAdjust="spacingAndGlyphs">Love language speaks</text>
<text x="565.8" y="618.7" textLength="122.5" lengthAdjust="spacingAndGlyphs">in silent ways,</text>
<text x="536.3" y="634.2" textLength="189.3" lengthAdjust="spacingAndGlyphs">Through acts of care</text>
<text x="538.3" y="650.7" textLength="185.4" lengthAdjust="spacingAndGlyphs">and words of praise,</text>
<text x="561.9" y="666.7" textLength="130.7" lengthAdjust="spacingAndGlyphs">A touch, a gift,</text>
<text x="548.4" y="682.7" textLength="161.6" lengthAdjust="spacingAndGlyphs">a moment shared,</text>
<text x="568.5" y="696.7" textLength="111.9" lengthAdjust="spacingAndGlyphs">In these small</text>
<text x="558.0" y="712.2" textLength="133.4" lengthAdjust="spacingAndGlyphs">gestures love is</text>
<text x="586.0" y="727.7" textLength="73.4" lengthAdjust="spacingAndGlyphs">declared</text>
</g>
<rect x="410" y="435" width="431" height="432.6" fill="none" stroke="#4fc3d1" stroke-width="1.6"/>
<rect x="407.0" y="432.0" width="6" height="6" fill="#fff" stroke="#4fc3d1" stroke-width="1.2"/>
<rect x="407.0" y="648.3" width="6" height="6" fill="#fff" stroke="#4fc3d1" stroke-width="1.2"/>
<rect x="407.0" y="864.6" width="6" height="6" fill="#fff" stroke="#4fc3d1" stroke-width="1.2"/>
<rect x="622.5" y="432.0" width="6" height="6" fill="#fff" stroke="#4fc3d1" stroke-width="1.2"/>
<rect x="622.5" y="864.6" width="6" height="6" fill="#fff" stroke="#4fc3d1" stroke-width="1.2"/>
<rect x="838.0" y="432.0" width="6" height="6" fill="#fff" stroke="#4fc3d1" stroke-width="1.2"/>
<rect x="838.0" y="648.3" width="6" height="6" fill="#fff" stroke="#4fc3d1" stroke-width="1.2"/>
<rect x="838.0" y="864.6" width="6" height="6" fill="#fff" stroke="#4fc3d1" stroke-width="1.2"/>
<rect x="67" y="110" width="1541" height="21" fill="#d4e6ec"/>
<rect x="67" y="110" width="20" height="919" fill="#d4e6ec"/>
<rect x="410" y="110.5" width="431" height="20" fill="#c5e2fd"/>
<rect x="67" y="435" width="19.5" height="432.5" fill="#c5e2fd"/>
<path d="M411 110.5V130M840 110.5V130" stroke="#4a8cfb" stroke-width="2"/>
<path d="M67 435.5H86.5M67 867H86.5" stroke="#4a8cfb" stroke-width="1.6"/>
<path d="M127.5 127V130M178.5 127V130M229.5 127V130M280.5 127V130M332.5 127V130M383.5 127V130M434.5 127V130M485.5 127V130M536.5 127V130M587.5 127V130M638.5 127V130M689.5 127V130M740.5 127V130M791.5 127V130M842.5 127V130M893.5 127V130M944.5 127V130M995.5 127V130M1046.5 127V130M1097.5 127V130M1148.5 127V130M1199.5 127V130M1250.5 127V130M1302.5 127V130M1353.5 127V130M1404.5 127V130M1455.5 127V130M1506.5 127V130M1557.5 127V130M1608.5 127V130M1659.5 127V130M83 152.5H86M83 203.5H86M83 254.5H86M83 305.5H86M83 356.5H86M83 407.5H86M83 458.5H86M83 509.5H86M83 561.5H86M83 612.5H86M83 663.5H86M83 714.5H86M83 765.5H86M83 816.5H86M83 867.5H86M83 918.5H86M83 969.5H86M83 1020.5H86M83 1071.5H86" stroke="#18a0ad" stroke-width="1" fill="none"/>
<path d="M67 130.5H1608M86.5 110.5V1029" stroke="#18a0ad" stroke-width="1" fill="none"/>
<g font-size="9.5" fill="#1a9dab" text-anchor="middle" stroke="#1a9dab" stroke-width=".12">
<text x="76.3" y="125.3" font-size="9.5">cm</text>
<text x="178.0" y="122">-2</text>
<text x="280.1" y="122">0</text>
<text x="382.2" y="122">2</text>
<text x="484.3" y="122">4</text>
<text x="586.4" y="122">6</text>
<text x="688.5" y="122">8</text>
<text x="790.6" y="122">10</text>
<text x="892.7" y="122">12</text>
<text x="994.8" y="122">14</text>
<text x="1096.9" y="122">16</text>
<text x="1199.0" y="122">18</text>
<text x="1301.1" y="122">20</text>
<text x="1403.2" y="122">22</text>
<text x="1505.3" y="122">24</text>
<text x="1607.4" y="122">26</text>
<text transform="translate(80 205.6) rotate(-90)" x="0" y="0">-2</text>
<text transform="translate(80 307.7) rotate(-90)" x="0" y="0">0</text>
<text transform="translate(80 409.8) rotate(-90)" x="0" y="0">2</text>
<text transform="translate(80 511.9) rotate(-90)" x="0" y="0">4</text>
<text transform="translate(80 614.0) rotate(-90)" x="0" y="0">6</text>
<text transform="translate(80 716.1) rotate(-90)" x="0" y="0">8</text>
<text transform="translate(80 818.2) rotate(-90)" x="0" y="0">10</text>
<text transform="translate(80 920.3) rotate(-90)" x="0" y="0">12</text>
<text transform="translate(80 1022.4) rotate(-90)" x="0" y="0">14</text>
</g>
<rect x="87" y="1020.5" width="1521" height="9" fill="#000" opacity=".04"/>
<rect x="87" y="1020" width="1521" height="1" fill="#000" opacity=".07"/>
<rect x="339.2" y="1022" width="72.2" height="12" rx="4" fill="#000" opacity=".44"/>
</g></svg>
<div class="abs" style="left:541px;top:380px;width:168px;height:29px;border-radius:3px;background:#43474f"></div>
<div class="tt" style="left:549.50px;top:388.15px;font-size:14px;color:#fff;letter-spacing:0.672px;">W:8.41 cm  H:8.44 cm</div>
<div class="abs" style="left:98.5px;top:967.5px;width:121px;height:39px;border-radius:19.5px;background:#e5e7ec;border:1px solid #c8ccd4"></div>
<div class="abs" style="left:103px;top:972px;width:30px;height:30px;border-radius:15px;background:#fff"></div>
<div class="abs" style="left:185px;top:972px;width:30px;height:30px;border-radius:15px;background:#fff"></div>
<svg class="abs" style="left:112px;top:981px" width="12" height="12" viewBox="0 0 12 12"><path d="M0.5 6H11.5" stroke="#b9bcc5" stroke-width="1.3"/></svg>
<svg class="abs" style="left:194px;top:981px" width="12" height="12" viewBox="0 0 12 12"><path d="M0.5 6H11.5M6 0.5V11.5" stroke="#b9bcc5" stroke-width="1.3"/></svg>
<div class="tt" style="left:141.25px;top:980.65px;font-size:14px;color:#9a9ea8;letter-spacing:-0.102px;">180%</div>
<svg class="abs" style="left:241px;top:977px" width="24" height="23" viewBox="0 0 24 23"><path d="M1 1 L22 9.6 L12.6 12.4 L8.2 21.6Z" fill="#16181c"/></svg>
<svg class="abs" style="left:280px;top:974px" width="31" height="28" viewBox="0 0 28 28" preserveAspectRatio="none"><path d="M9.6 15.6 L8.4 6.2 a1.5 1.5 0 0 1 3 -.4 L12.4 11.6 L12.2 3.6 a1.5 1.5 0 0 1 3 0 L15.6 11.4 L16.8 4.6 a1.5 1.5 0 0 1 3 .5 L18.9 12.4 L21 8.8 a1.4 1.4 0 0 1 2.6 1.2 C22.4 14 22.6 18.2 21 21.6 C19.4 25.4 16.8 26.4 13.6 26.2 C10.2 26 8.2 24.2 5.8 21 L2 16.4 a1.6 1.6 0 0 1 2.4 -2.2 L9 18.8" fill="#f3f4f8" stroke="#5a6070" stroke-width="1.5" stroke-linejoin="round" stroke-linecap="round"/></svg>
<div id="sidebar"></div>
<svg class="abs" style="left:22px;top:70px" width="18" height="18" viewBox="0 0 18 18"><rect width="18" height="18" rx="5.2" fill="#8792a2"/><path d="M12.9 3.4 a1.2 1.2 0 0 1 1.7 1.7 L8.8 10.9 L7.1 9.2 Z" fill="#d5d9e0"/><path d="M6.4 9.9 l1.7 1.7 c0.3 1.8 -1.6 3 -4.6 2.4 c1.2 -0.6 0.6 -3.6 2.9 -4.1Z" fill="#fff"/></svg>
<svg class="abs" style="left:20px;top:145px" width="22" height="20" viewBox="0 0 22 20"><path d="M11 0.5 L13.6 7.4 L21.2 7.6 L15.2 12.2 L17.4 19.4 L11 15.2 L4.6 19.4 L6.8 12.2 L0.8 7.6 L8.4 7.4 Z" fill="#c3c9d3"/><path d="M11 0.5 L13.6 7.4 L11 10.2 L8.4 7.4Z M15.2 12.2 L17.4 19.4 L11 15.2 L12 11Z" fill="#8792a2"/><circle cx="12" cy="10.2" r="1.9" fill="#fff"/></svg>
<svg class="abs" style="left:22px;top:222px" width="18" height="18" viewBox="0 0 18 18"><path d="M0.6 0.6 H17.4 V5.4 H0.6Z" fill="#8792a2"/><path d="M0.6 4 H17.4 V5.8 a1 1 0 0 1 -2 0 V5 H2.6 V5.8 a1 1 0 0 1 -2 0Z" fill="#c3c9d3"/><path d="M6.8 3 H11.2 V13.6 H13 a1.9 1.9 0 0 1 0 3.8 H5 a1.9 1.9 0 0 1 0 -3.8 H6.8Z" fill="#8792a2"/></svg>
<svg class="abs" style="left:21px;top:297px" width="20" height="20" viewBox="0 0 20 20"><path d="M12.2 1.2 a1.4 1.4 0 0 1 2 0 L18.8 5.8 a1.4 1.4 0 0 1 0 2 L17 9.6 L10.4 3Z" fill="#c3c9d3"/><path d="M9.6 3.8 L16.2 10.4 L12.4 16.4 L1.4 18.6 L3.6 7.6Z" fill="#8792a2"/><path d="M2.4 17.6 L8.6 11.4" stroke="#fff" stroke-width="1.2"/><circle cx="9.4" cy="10.6" r="1.7" fill="#fff"/></svg>
<svg class="abs" style="left:22px;top:374px" width="18" height="18" viewBox="0 0 18 18"><path d="M9 0.4 L15.6 7 H11.6 V12.4 H6.4 V7 H2.4Z" fill="#8792a2"/><rect x="0.4" y="13.6" width="17.2" height="4" rx="1" fill="#c3c9d3"/></svg>
<svg class="abs" style="left:22px;top:450px" width="18" height="18" viewBox="0 0 18 18"><rect width="18" height="18" rx="3" fill="#c3c9d3"/><path d="M1.6 15.6 V11.6 L5.6 8.4 L9 11.2 L13.4 6.8 L16.4 9.4 V15.6Z" fill="#8792a2"/><circle cx="4.4" cy="4.2" r="1.6" fill="#fff"/></svg>
<div class="tt" style="left:20.5px;top:516px;font-size:22px;font-weight:bold;color:#8792a2;letter-spacing:-0.6px;-webkit-text-stroke:.7px #8792a2">AI</div>
<svg class="abs" style="left:22px;top:602px" width="18" height="18" viewBox="0 0 18 18"><path d="M0.4 2.4 a1.6 1.6 0 0 1 1.6 -1.6 H7 L9.2 3 H16 a1.6 1.6 0 0 1 1.6 1.6 V8.4 H0.4Z" fill="#8792a2"/><path d="M0.4 9.8 H17.6 V15.6 a1.6 1.6 0 0 1 -1.6 1.6 H2 a1.6 1.6 0 0 1 -1.6 -1.6Z" fill="#8792a2"/></svg>
<div class="new" style="top:435px">NEW</div>
<div class="new" style="top:587px">NEW</div>
<div class="tt" style="left:9.70px;top:95.84px;font-size:12px;color:#2b3037;letter-spacing:0.652px;">Pattern</div>
<div class="tt" style="left:13.20px;top:171.84px;font-size:12px;color:#2b3037;letter-spacing:0.225px;">Shape</div>
<div class="tt" style="left:19.35px;top:247.84px;font-size:12px;color:#2b3037;letter-spacing:0.431px;">Text</div>
<div class="tt" style="left:20.35px;top:323.84px;font-size:12px;color:#2b3037;letter-spacing:-0.026px;">Pen</div>
<div class="tt" style="left:10.15px;top:399.84px;font-size:12px;color:#2b3037;letter-spacing:0.735px;">Upload</div>
<div class="tt" style="left:10.60px;top:475.84px;font-size:12px;color:#2b3037;letter-spacing:0.687px;">Library</div>
<div class="tt" style="left:25.70px;top:543.84px;font-size:12px;color:#2b3037;letter-spacing:-0.739px;">AI</div>
<div class="tt" style="left:7.25px;top:559.84px;font-size:12px;color:#2b3037;letter-spacing:0.591px;">Painting</div>
<div class="tt" style="left:6.25px;top:627.84px;font-size:12px;color:#2b3037;letter-spacing:0.470px;">My Zone</div>
<div id="toolbar"></div>
<div class="abs" style="left:959px;top:54px;width:59px;height:52px;border-radius:5px;background:#f1f4f5"></div>
<svg class="abs" style="left:96px;top:62px" width="15" height="15" viewBox="0 0 15 15"><path d="M0 1.4 H14.4 M0 7.5 H14.4 M0 13.6 H14.4" stroke="#5d636d" stroke-width="1.3"/></svg>
<svg class="abs" style="left:115.5px;top:68.2px" width="5" height="4" viewBox="0 0 5 4"><path d="M0 0 H5 L2.5 4 Z" fill="#3d424a"/></svg>
<svg class="abs" style="left:150px;top:62px" width="17" height="17" viewBox="0 0 17 17"><path d="M2.4 1.2 H11.6 L15.6 5 V14.2 a1.4 1.4 0 0 1 -1.4 1.4 H2.4 a1.4 1.4 0 0 1 -1.4 -1.4 V2.6 a1.4 1.4 0 0 1 1.4 -1.4Z" fill="none" stroke="#5d636d" stroke-width="1.1"/><path d="M4.6 1.4 V4 a.8 .8 0 0 0 .8 .8 H10 a.8 .8 0 0 0 .8 -.8 V1.4 M3.8 15.4 V11.4 a1 1 0 0 1 1 -1 H11.8 a1 1 0 0 1 1 1 V15.4" fill="none" stroke="#5d636d" stroke-width="1.1"/></svg>
<svg class="abs" style="left:203px;top:62px" width="17" height="17" viewBox="0 0 17 17"><path d="M9.4 1.4 L6 4.6 L9.6 7.4 M6.4 4.8 C10 3.6 15.6 5.4 15.4 10 C15.2 13.4 12.8 15.4 10 15.6 M0.6 15.6 H10" fill="none" stroke="#5d636d" stroke-width="1.1" stroke-linejoin="round" stroke-linecap="round"/></svg>
<svg class="abs" style="left:256px;top:62px" width="17" height="17" viewBox="0 0 17 17"><path d="M7.6 1.4 L11 4.6 L7.4 7.4 M10.6 4.8 C7 3.6 1.4 5.4 1.6 10 C1.8 13.4 4.2 15.4 7 15.6 M16.4 15.6 H7" fill="none" stroke="#c6cbd4" stroke-width="1.1" stroke-linejoin="round" stroke-linecap="round"/></svg>
<div class="sep" style="left:306px"></div>
<div class="abs" style="left:331px;top:58px;width:82px;height:20px;border:1px solid #c9cdd7;border-radius:4px;background:#fff"></div>
<div class="tt" style="left:356.25px;top:62.84px;font-size:12px;color:#3d424a;letter-spacing:-0.076px;">Fill</div>
<svg class="abs" style="left:401.4px;top:65.8px" width="6" height="4.6" viewBox="0 0 6 4.6"><path d="M0 0 H6 L3 4.6 Z" fill="#3d424a"/></svg>
<svg class="abs" style="left:437px;top:65px" width="17" height="11" viewBox="0 0 17 11"><path d="M0.6 0.8 C5 2.2 12 2.2 16.4 0.8 V10.2 C12 8.8 5 8.8 0.6 10.2Z M5.6 1.8 V9.2 M11.4 1.8 V9.2" fill="none" stroke="#5d636d" stroke-width="1.1" stroke-linejoin="round"/></svg>
<svg class="abs" style="left:490px;top:62px" width="18" height="17" viewBox="0 0 18 17"><path d="M9 0.8 L11.4 6 L17.2 6.6 L12.9 10.5 L14.1 16.2 L9 13.3 L3.9 16.2 L5.1 10.5 L0.8 6.6 L6.6 6Z" fill="none" stroke="#5d636d" stroke-width="1" stroke-linejoin="round"/><path d="M9 4.2 L10.5 7.4 L14 7.8 L11.4 10.2 L12.1 13.6 L9 11.9 L5.9 13.6 L6.6 10.2 L4 7.8 L7.5 7.4Z" fill="#5d636d"/><circle cx="15.8" cy="15.8" r=".7" fill="#5d636d"/></svg>
<svg class="abs" style="left:541px;top:62px" width="16" height="16" viewBox="0 0 16 16"><rect x="0.9" y="0.9" width="5.4" height="5.4" fill="none" stroke="#5d636d" stroke-width="1"/><path d="M0.4 2.2 V0.4 H2.2 M5 0.4 H6.8 V2.2 M6.8 5 V6.8 H5 M2.2 6.8 H0.4 V5" fill="none" stroke="#5d636d" stroke-width="1.1"/><rect x="9" y="0.6" width="6.6" height="6.6" rx="1.6" fill="#5d636d"/><rect x="0.4" y="9" width="6.6" height="6.6" rx="1.6" fill="#5d636d"/><rect x="9" y="9" width="6.6" height="6.6" rx="1.6" fill="#5d636d"/></svg>
<svg class="abs" style="left:561.4px;top:67px" width="6" height="4.8" viewBox="0 0 6 4.8"><path d="M0 0 H6 L3 4.8 Z" fill="#3d424a"/></svg>
<svg class="abs" style="left:622px;top:62px" width="17" height="17" viewBox="0 0 17 17"><rect width="17" height="17" rx="2.4" fill="#c6cbd4"/><circle cx="8.5" cy="8.5" r="4.1" fill="#fff"/></svg>
<svg class="abs" style="left:714px;top:63px" width="16" height="15" viewBox="0 0 16 15"><path d="M0.8 0.8 L14.8 5.8 L8 8.2 L5.4 14.2Z" fill="none" stroke="#c6cbd4" stroke-width="1.1" stroke-linejoin="round"/></svg>
<div class="sep" style="left:775px"></div>
<svg class="abs" style="left:802px;top:62px" width="16" height="14" viewBox="0 0 16 14"><path d="M7.6 0 V14" stroke="#5d636d" stroke-width="1.1"/><path d="M0.6 2.6 L6.2 7 L0.6 11.4Z" fill="#5d636d"/><path d="M15 3 L9.8 7 L15 11Z" fill="none" stroke="#5d636d" stroke-width="1"/></svg>
<svg class="abs" style="left:823.8px;top:66px" width="6" height="4.8" viewBox="0 0 6 4.8"><path d="M0 0 H6 L3 4.8 Z" fill="#3d424a"/></svg>
<svg class="abs" style="left:851px;top:62px" width="16" height="14" viewBox="0 0 16 14"><path d="M1 0 V14" stroke="#5d636d" stroke-width="1.1"/><rect x="3.4" y="2.8" width="6.6" height="3" rx=".8" fill="#dfe2e7" stroke="#5d636d" stroke-width="1"/><rect x="3.4" y="8" width="10.8" height="3" rx=".8" fill="#dfe2e7" stroke="#5d636d" stroke-width="1"/></svg>
<svg class="abs" style="left:872.6px;top:66px" width="6" height="4.8" viewBox="0 0 6 4.8"><path d="M0 0 H6 L3 4.8 Z" fill="#3d424a"/></svg>
<svg class="abs" style="left:908px;top:61px" width="15" height="17" viewBox="0 0 15 17"><path d="M7.5 0.8 L14 4.2 L7.5 7.6 L1 4.2Z" fill="none" stroke="#5d636d" stroke-width="1.1" stroke-linejoin="round"/><path d="M0.6 6.6 L7.5 10.2 L14.4 6.6 L14.4 9.2 L7.5 12.8 L0.6 9.2Z" fill="#5d636d"/><path d="M1 12 L7.5 15.4 L14 12" fill="none" stroke="#5d636d" stroke-width="1.1" stroke-linejoin="round"/></svg>
<svg class="abs" style="left:929.2px;top:66px" width="6" height="4.8" viewBox="0 0 6 4.8"><path d="M0 0 H6 L3 4.8 Z" fill="#3d424a"/></svg>
<svg class="abs" style="left:975px;top:61px" width="17" height="17" viewBox="0 0 17 17"><rect x="0.8" y="0.8" width="10.6" height="10.4" rx="1.8" fill="none" stroke="#5d636d" stroke-width="1"/><rect x="5.6" y="5.4" width="10.6" height="10.4" rx="1.8" fill="none" stroke="#5d636d" stroke-width="1"/><rect x="5.6" y="5.4" width="5.8" height="5.8" fill="#5d636d"/></svg>
<svg class="abs" style="left:997.4px;top:66px" width="6" height="4.8" viewBox="0 0 6 4.8"><path d="M0 0 H6 L3 4.8 Z" fill="#3d424a"/></svg>
<div class="tt" style="left:97.70px;top:86.84px;font-size:12px;color:#4d535c;letter-spacing:-0.111px;">File</div>
<div class="tt" style="left:145.20px;top:86.84px;font-size:12px;color:#4d535c;letter-spacing:-0.517px;">Save</div>
<div class="tt" style="left:195.85px;top:86.84px;font-size:12px;color:#4d535c;letter-spacing:0.471px;">Undo</div>
<div class="tt" style="left:250.80px;top:86.84px;font-size:12px;color:#c6cbd4;letter-spacing:-0.162px;">Redo</div>
<div class="tt" style="left:358.20px;top:87.84px;font-size:12px;color:#4d535c;letter-spacing:0.336px;">View</div>
<div class="tt" style="left:431.00px;top:86.84px;font-size:12px;color:#4d535c;letter-spacing:-0.075px;">Warp</div>
<div class="tt" style="left:482.90px;top:86.84px;font-size:12px;color:#4d535c;letter-spacing:0.081px;">Offset</div>
<div class="tt" style="left:539.15px;top:86.84px;font-size:12px;color:#4d535c;letter-spacing:-0.243px;">Array</div>
<div class="tt" style="left:591.45px;top:86.84px;font-size:12px;color:#c6cbd4;letter-spacing:0.262px;">Clipping Mask</div>
<div class="tt" style="left:694.85px;top:86.84px;font-size:12px;color:#c6cbd4;letter-spacing:0.282px;">Edit Point</div>
<div class="tt" style="left:804.75px;top:86.84px;font-size:12px;color:#4d535c;letter-spacing:-0.278px;">Flip</div>
<div class="tt" style="left:849.40px;top:86.84px;font-size:12px;color:#4d535c;letter-spacing:0.129px;">Align</div>
<div class="tt" style="left:898.10px;top:86.84px;font-size:12px;color:#4d535c;letter-spacing:0.285px;">Arrange</div>
<div class="tt" style="left:963.45px;top:86.84px;font-size:12px;color:#4d535c;letter-spacing:0.346px;">Combine</div>
<div id="panel"></div>
<div class="abs" style="left:1619px;top:56px;width:287px;height:58px;border-radius:5px;background:#eef2fe;overflow:hidden"><svg width="287" height="58" viewBox="0 0 287 58"><g fill="#f1f4fe" stroke="#f4f7ff" stroke-width="1"><path d="M218 -6 L240 -6 L232 22 L252 30 L246 44 L208 30Z"/><rect x="246" y="-2" width="40" height="15" transform="rotate(35 266 5)"/><circle cx="226" cy="58" r="17"/><path d="M244 34 L276 42 L248 62Z"/></g></svg></div>
<svg class="abs" style="left:1621px;top:74px" width="78" height="24" viewBox="0 0 78 24"><defs><linearGradient id="mg" x1="0" y1="0" x2="0" y2="1"><stop offset="0" stop-color="#f8f8f6"/><stop offset="1" stop-color="#eeeeeb"/></linearGradient></defs><rect x="0.5" y="4.4" width="8" height="13" rx="2.4" fill="#f3f3f1" stroke="#e3e3e0" stroke-width=".6"/><rect x="5.4" y="1" width="71.6" height="21.6" rx="3.4" fill="url(#mg)" stroke="#dddcd8" stroke-width=".7"/><path d="M6 4.2 H76.4" stroke="#deddd9" stroke-width=".7"/><rect x="16.2" y="4.4" width="49.4" height="18" fill="#f5f5f3" stroke="#e4e4e1" stroke-width=".5"/><path d="M8 19.6 H16 M66 19.6 H75" stroke="#c9c8c4" stroke-width=".8"/><path d="M16.4 22.2 H65.6" stroke="#a9a9a6" stroke-width="1.1"/><path d="M7 22.6 H76" stroke="#d2d2cf" stroke-width=".8"/><rect x="35" y="9.8" width="2.6" height="2.8" fill="none" stroke="#b3b3b3" stroke-width=".6"/><path d="M38.6 11.2 H46" stroke="#c4c4c4" stroke-width="1.2"/></svg>
<div class="tt" style="left:1713.20px;top:67.20px;font-size:13px;color:#23272e;letter-spacing:0.033px;">iCraft Cutting Machine</div>
<div class="abs" style="left:1713px;top:95.5px;width:5px;height:5px;border-radius:3px;background:#c7cad2"></div>
<div class="tt" style="left:1722.40px;top:93.61px;font-size:10.5px;color:#4d535c;letter-spacing:0.241px;">Not connected</div>
<svg class="abs" style="left:1883px;top:68px" width="10" height="10" viewBox="0 0 10 10"><path d="M0.4 3.6 H9.4 L6.6 0.8 M9.6 6.4 H0.6 L3.4 9.2" fill="none" stroke="#23272e" stroke-width="1"/></svg>
<div class="abs" style="left:1619px;top:120px;width:287px;height:38px;border-radius:19px;background:#1ec8d3"></div>
<div class="tt" style="left:1745.05px;top:132.93px;font-size:14.5px;color:#fff;letter-spacing:-0.590px;font-weight:bold;">Make</div>
<div class="abs" style="left:1684.5px;top:173px;width:60px;height:29.5px;border-radius:5px;background:#f1f4f5"></div>
<div class="tt" style="left:1627.00px;top:180.75px;font-size:14px;color:#4d535c;letter-spacing:0.284px;">Design</div>
<div class="tt" style="left:1692.70px;top:180.75px;font-size:14px;color:#23272e;letter-spacing:0.256px;">Layers</div>
<svg class="abs" style="left:1884px;top:182px" width="13" height="12" viewBox="0 0 13 12"><path d="M0 1 H12.4 M0 5.8 H5.4 M0 10.6 H5.4" stroke="#7b818b" stroke-width="1.2"/><path d="M12.4 5.2 V11.2 L7 8.2Z" fill="#3d424a"/></svg>
<div class="abs" style="left:1609px;top:212px;width:302px;height:1px;background:#e3e6eb"></div>
<div class="row sel" style="top:213px"></div>
<div class="row sel" style="top:653px"></div>
<div class="thumb" style="left:1622px;top:221px;background:#f3f5f6"></div><div class="abs" style="left:1624px;top:223px;width:20px;height:20px;border-radius:10px;background:#82858e"></div>
<div class="tt" style="left:1650.50px;top:227.94px;font-size:12px;color:#4d535c;letter-spacing:0.077px;">Layers</div>
<svg class="abs" style="left:1877px;top:227.7px" width="15" height="11" viewBox="0 0 15 11"><path d="M0.6 5.5 C2.4 2.2 4.8 0.7 7.5 0.7 C10.2 0.7 12.6 2.2 14.4 5.5 C12.6 8.8 10.2 10.3 7.5 10.3 C4.8 10.3 2.4 8.8 0.6 5.5Z" fill="none" stroke="#555b65" stroke-width="1.1"/><circle cx="7.5" cy="5.5" r="3.1" fill="#555b65"/></svg>
<svg class="abs" style="left:1623px;top:269px" width="14" height="8" viewBox="0 0 14 8"><path d="M1 0.8 L7 6.8 L13 0.8" fill="none" stroke="#4d535c" stroke-width="1.1"/></svg>
<svg class="abs" style="left:1644px;top:267px" width="12" height="12" viewBox="0 0 12 12"><path d="M0.5 11.5 V0.5 H3.2 L4.6 1.6 H11.5 V11.5Z M0.5 4.4 H11.5" fill="none" stroke="#5d636d" stroke-width="1"/></svg>
<div class="tt" style="left:1662.50px;top:267.54px;font-size:12px;color:#4d535c;letter-spacing:0.362px;">Group</div>
<svg class="abs" style="left:1877px;top:267.7px" width="15" height="11" viewBox="0 0 15 11"><path d="M0.6 5.5 C2.4 2.2 4.8 0.7 7.5 0.7 C10.2 0.7 12.6 2.2 14.4 5.5 C12.6 8.8 10.2 10.3 7.5 10.3 C4.8 10.3 2.4 8.8 0.6 5.5Z" fill="none" stroke="#555b65" stroke-width="1.1"/><circle cx="7.5" cy="5.5" r="3.1" fill="#555b65"/></svg>
<div class="thumb" style="left:1642px;top:301px"><svg width="24" height="24" viewBox="0 0 24 24"><circle cx="19.6" cy="3.4" r=".5" fill="#d9a0a8"/><circle cx="3.6" cy="20.6" r=".5" fill="#d9a0a8"/></svg></div>
<div class="tt" style="left:1670.30px;top:307.94px;font-size:12px;color:#4d535c;letter-spacing:0.077px;">Layers</div>
<svg class="abs" style="left:1877px;top:307.7px" width="15" height="11" viewBox="0 0 15 11"><path d="M0.6 5.5 C2.4 2.2 4.8 0.7 7.5 0.7 C10.2 0.7 12.6 2.2 14.4 5.5 C12.6 8.8 10.2 10.3 7.5 10.3 C4.8 10.3 2.4 8.8 0.6 5.5Z" fill="none" stroke="#555b65" stroke-width="1.1"/><circle cx="7.5" cy="5.5" r="3.1" fill="#555b65"/></svg>
<div class="thumb" style="left:1642px;top:341px"><svg width="24" height="24" viewBox="0 0 24 24"><path d="M2 8 V12" stroke="#e3a3ad" stroke-width=".7"/><path d="M18.6 9 h-1 v4 h1" stroke="#d98b98" stroke-width=".7" fill="none"/></svg></div>
<div class="tt" style="left:1670.30px;top:347.94px;font-size:12px;color:#4d535c;letter-spacing:0.077px;">Layers</div>
<svg class="abs" style="left:1877px;top:347.7px" width="15" height="11" viewBox="0 0 15 11"><path d="M0.6 5.5 C2.4 2.2 4.8 0.7 7.5 0.7 C10.2 0.7 12.6 2.2 14.4 5.5 C12.6 8.8 10.2 10.3 7.5 10.3 C4.8 10.3 2.4 8.8 0.6 5.5Z" fill="none" stroke="#555b65" stroke-width="1.1"/><circle cx="7.5" cy="5.5" r="3.1" fill="#555b65"/></svg>
<div class="thumb" style="left:1642px;top:381px"><svg width="24" height="24" viewBox="0 0 24 24"><path d="M2 5 l1 2 M20 14.6 v1.4" stroke="#8c8f96" stroke-width=".7"/></svg></div>
<div class="tt" style="left:1670.30px;top:387.94px;font-size:12px;color:#4d535c;letter-spacing:0.077px;">Layers</div>
<svg class="abs" style="left:1877px;top:387.7px" width="15" height="11" viewBox="0 0 15 11"><path d="M0.6 5.5 C2.4 2.2 4.8 0.7 7.5 0.7 C10.2 0.7 12.6 2.2 14.4 5.5 C12.6 8.8 10.2 10.3 7.5 10.3 C4.8 10.3 2.4 8.8 0.6 5.5Z" fill="none" stroke="#555b65" stroke-width="1.1"/><circle cx="7.5" cy="5.5" r="3.1" fill="#555b65"/></svg>
<div class="thumb" style="left:1642px;top:421px"><svg width="24" height="24" viewBox="0 0 24 24"><path d="M5 4 l1 3 l-1 1Z M5 16.6 v2" stroke="#e0a0ab" stroke-width=".8" fill="#e0a0ab"/><path d="M18.6 4.6 v1.4" stroke="#e0a0ab" stroke-width=".6"/></svg></div>
<div class="tt" style="left:1670.30px;top:427.94px;font-size:12px;color:#4d535c;letter-spacing:0.077px;">Layers</div>
<svg class="abs" style="left:1877px;top:427.7px" width="15" height="11" viewBox="0 0 15 11"><path d="M0.6 5.5 C2.4 2.2 4.8 0.7 7.5 0.7 C10.2 0.7 12.6 2.2 14.4 5.5 C12.6 8.8 10.2 10.3 7.5 10.3 C4.8 10.3 2.4 8.8 0.6 5.5Z" fill="none" stroke="#555b65" stroke-width="1.1"/><circle cx="7.5" cy="5.5" r="3.1" fill="#555b65"/></svg>
<div class="thumb" style="left:1642px;top:461px"><svg width="24" height="24" viewBox="0 0 24 24"><g fill="#5d636c"><circle cx="4" cy="3.6" r=".7"/><circle cx="13.6" cy="2.8" r=".7"/><circle cx="17" cy="5" r=".7"/><circle cx="3" cy="10" r=".6"/><circle cx="12" cy="10.6" r=".6"/><circle cx="20.6" cy="13.6" r=".7"/><circle cx="14.6" cy="15.6" r=".7"/><circle cx="8" cy="20" r=".7"/><circle cx="17.6" cy="19.6" r=".7"/></g></svg></div>
<div class="tt" style="left:1670.30px;top:467.94px;font-size:12px;color:#4d535c;letter-spacing:0.077px;">Layers</div>
<svg class="abs" style="left:1877px;top:467.7px" width="15" height="11" viewBox="0 0 15 11"><path d="M0.6 5.5 C2.4 2.2 4.8 0.7 7.5 0.7 C10.2 0.7 12.6 2.2 14.4 5.5 C12.6 8.8 10.2 10.3 7.5 10.3 C4.8 10.3 2.4 8.8 0.6 5.5Z" fill="none" stroke="#555b65" stroke-width="1.1"/><circle cx="7.5" cy="5.5" r="3.1" fill="#555b65"/></svg>
<div class="thumb" style="left:1642px;top:501px"><svg width="24" height="24" viewBox="0 0 24 24"><g stroke="#3d4149" stroke-width="1.5"><path d="M8.6 6.6 H21 M9 8.8 H20.6 M9.6 11 H20 M10.6 13 H18.6 M12.4 14.8 H17"/></g></svg></div>
<div class="tt" style="left:1670.30px;top:507.94px;font-size:12px;color:#4d535c;letter-spacing:0.077px;">Layers</div>
<svg class="abs" style="left:1877px;top:507.7px" width="15" height="11" viewBox="0 0 15 11"><path d="M0.6 5.5 C2.4 2.2 4.8 0.7 7.5 0.7 C10.2 0.7 12.6 2.2 14.4 5.5 C12.6 8.8 10.2 10.3 7.5 10.3 C4.8 10.3 2.4 8.8 0.6 5.5Z" fill="none" stroke="#555b65" stroke-width="1.1"/><circle cx="7.5" cy="5.5" r="3.1" fill="#555b65"/></svg>
<div class="thumb" style="left:1642px;top:541px"><svg width="24" height="24" viewBox="0 0 24 24"><g fill="#111"><circle cx="4" cy="3.6" r=".7"/><circle cx="12.4" cy="3.4" r=".7"/><circle cx="21.4" cy="4.4" r=".7"/><circle cx="4.6" cy="11.6" r=".7"/><circle cx="9.6" cy="15.6" r=".7"/><circle cx="21" cy="17.4" r=".7"/><circle cx="12.4" cy="19.6" r=".7"/><ellipse cx="4.8" cy="19.4" rx="2.8" ry="2" transform="rotate(25 4.8 19.4)"/></g></svg></div>
<div class="tt" style="left:1670.30px;top:547.94px;font-size:12px;color:#4d535c;letter-spacing:0.077px;">Layers</div>
<svg class="abs" style="left:1877px;top:547.7px" width="15" height="11" viewBox="0 0 15 11"><path d="M0.6 5.5 C2.4 2.2 4.8 0.7 7.5 0.7 C10.2 0.7 12.6 2.2 14.4 5.5 C12.6 8.8 10.2 10.3 7.5 10.3 C4.8 10.3 2.4 8.8 0.6 5.5Z" fill="none" stroke="#555b65" stroke-width="1.1"/><circle cx="7.5" cy="5.5" r="3.1" fill="#555b65"/></svg>
<div class="thumb" style="left:1642px;top:581px"><svg width="24" height="24" viewBox="0 0 24 24"><g fill="#ffb5c6"><circle cx="5" cy="5" r="1"/><circle cx="8.6" cy="3" r=".9"/><circle cx="19" cy="4" r="1"/><circle cx="21" cy="8" r=".8"/><circle cx="3.6" cy="9.6" r=".9"/><circle cx="3" cy="14" r=".9"/><circle cx="5" cy="18" r="1"/><circle cx="9" cy="20.6" r=".9"/><circle cx="13" cy="21" r=".9"/><circle cx="17.6" cy="20" r="1"/><circle cx="20.6" cy="16" r=".9"/><circle cx="21" cy="12" r=".8"/><circle cx="13" cy="3.6" r=".8"/><circle cx="16" cy="17" r=".8"/><circle cx="7" cy="14" r=".7"/></g><path d="M12 9 c2 -3 6 0 0 5 c-6 -5 -2 -8 0 -5Z" fill="none" stroke="#ffc6d2" stroke-width=".7"/></svg></div>
<div class="tt" style="left:1670.30px;top:587.94px;font-size:12px;color:#4d535c;letter-spacing:0.077px;">Layers</div>
<svg class="abs" style="left:1877px;top:587.7px" width="15" height="11" viewBox="0 0 15 11"><path d="M0.6 5.5 C2.4 2.2 4.8 0.7 7.5 0.7 C10.2 0.7 12.6 2.2 14.4 5.5 C12.6 8.8 10.2 10.3 7.5 10.3 C4.8 10.3 2.4 8.8 0.6 5.5Z" fill="none" stroke="#555b65" stroke-width="1.1"/><circle cx="7.5" cy="5.5" r="3.1" fill="#555b65"/></svg>
<div class="thumb" style="left:1642px;top:621px"><svg width="24" height="24" viewBox="0 0 24 24"><rect x="1.6" y="1.6" width="20.8" height="20.8" fill="#fdf3f5"/><path d="M12 10 c2.4 -4 8 -0.4 0 7 c-8 -7.4 -2.4 -11 0 -7Z" fill="#ffd0d8" stroke="#ffd0d8" stroke-width="1"/></svg></div>
<div class="tt" style="left:1670.30px;top:627.94px;font-size:12px;color:#4d535c;letter-spacing:0.077px;">Layers</div>
<svg class="abs" style="left:1877px;top:627.7px" width="15" height="11" viewBox="0 0 15 11"><path d="M0.6 5.5 C2.4 2.2 4.8 0.7 7.5 0.7 C10.2 0.7 12.6 2.2 14.4 5.5 C12.6 8.8 10.2 10.3 7.5 10.3 C4.8 10.3 2.4 8.8 0.6 5.5Z" fill="none" stroke="#555b65" stroke-width="1.1"/><circle cx="7.5" cy="5.5" r="3.1" fill="#555b65"/></svg>
<div class="thumb" style="left:1642px;top:661px"><svg width="24" height="24" viewBox="0 0 24 24"><rect x="1.6" y="1.6" width="20.8" height="20.8" fill="#f78b9b"/><g fill="#ffc1cd"><circle cx="4" cy="4" r=".7"/><circle cx="8" cy="3.4" r=".6"/><circle cx="19.6" cy="4" r=".7"/><circle cx="20.6" cy="9" r=".6"/><circle cx="3.4" cy="9" r=".6"/><circle cx="3.6" cy="15" r=".6"/><circle cx="7" cy="20" r=".7"/><circle cx="12" cy="21" r=".6"/><circle cx="17" cy="20.4" r=".7"/><circle cx="20.6" cy="15.6" r=".6"/></g><path d="M12 9.4 c2.4 -4.4 9 -0.4 0 8 c-9 -8.4 -2.4 -12.4 0 -8Z" fill="#fff" stroke="#fff" stroke-width="1"/></svg></div>
<div class="tt" style="left:1670.30px;top:667.94px;font-size:12px;color:#4d535c;letter-spacing:0.077px;">Layers</div>
<svg class="abs" style="left:1877px;top:667.7px" width="15" height="11" viewBox="0 0 15 11"><path d="M0.6 5.5 C2.4 2.2 4.8 0.7 7.5 0.7 C10.2 0.7 12.6 2.2 14.4 5.5 C12.6 8.8 10.2 10.3 7.5 10.3 C4.8 10.3 2.4 8.8 0.6 5.5Z" fill="none" stroke="#555b65" stroke-width="1.1"/><circle cx="7.5" cy="5.5" r="3.1" fill="#555b65"/></svg>
<div class="abs" style="left:1619px;top:911px;width:287px;height:54px;border-radius:5px;background:#f3f8fe"></div>
<div class="abs" style="left:1635.5px;top:930.5px;width:15px;height:15px;border-radius:8px;background:#4285f0"></div>
<div class="abs" style="left:1642.3px;top:934px;width:1.6px;height:1.8px;background:#fff"></div><div class="abs" style="left:1642.3px;top:936.8px;width:1.6px;height:5.4px;background:#fff"></div>
<div class="tt" style="left:1657.30px;top:923.70px;font-size:13px;color:#4d535c;letter-spacing:0.137px;">Note to use material in corresponding</div>
<div class="tt" style="left:1657.30px;top:940.60px;font-size:13px;color:#4d535c;letter-spacing:0.042px;">color!</div>
<div class="abs" style="left:1609px;top:975px;width:302px;height:54px;background:#e5e7ec"></div>
<svg class="abs" style="left:1637.4px;top:985px" width="20" height="19" viewBox="0 0 20 19"><path d="M0.8 4.4 V1.6 a.8 .8 0 0 1 .8 -.8 H4.6 M15.4 0.8 H18.4 a.8 .8 0 0 1 .8 .8 V4.4 M19.2 14.6 V17.4 a.8 .8 0 0 1 -.8 .8 H15.4 M4.6 18.2 H1.6 a.8 .8 0 0 1 -.8 -.8 V14.6" fill="none" stroke="#4d535c" stroke-width="1.3"/><rect x="4.4" y="4.2" width="7.6" height="7.6" rx="1.2" fill="none" stroke="#4d535c" stroke-width="1.3"/><rect x="8" y="7.6" width="7.6" height="7.4" rx="1.2" fill="#e5e7ec" stroke="#4d535c" stroke-width="1.3"/></svg>
<div class="tt" style="left:1630.90px;top:1012.24px;font-size:12px;color:#4d535c;letter-spacing:-0.288px;">Group</div>
<svg class="abs" style="left:1702px;top:986px" width="19" height="18" viewBox="0 0 19 18"><rect x="1.6" y="1.6" width="10.6" height="10.4" fill="none" stroke="#c3c8d1" stroke-width="1"/><rect x="6.8" y="6.6" width="10.4" height="9.6" fill="none" stroke="#c3c8d1" stroke-width="1"/><g fill="#e5e7ec" stroke="#c3c8d1" stroke-width=".9"><circle cx="1.6" cy="1.6" r="1.2"/><circle cx="12.2" cy="1.6" r="1.2"/><circle cx="1.6" cy="12" r="1.2"/><circle cx="12.2" cy="12" r="1.2"/><circle cx="17.2" cy="6.6" r="1.2"/><circle cx="6.8" cy="16.2" r="1.2"/><circle cx="17.2" cy="16.2" r="1.2"/><circle cx="6.8" cy="6.6" r="1.2"/></g></svg>
<div class="tt" style="left:1688.40px;top:1012.24px;font-size:12px;color:#c3c8d1;letter-spacing:-0.072px;">Ungroup</div>
<svg class="abs" style="left:1870px;top:985px" width="18" height="19" viewBox="0 0 18 19"><path d="M0.8 4 H17.2 M5.6 3.8 V2.4 a1.4 1.4 0 0 1 1.4 -1.4 H11 a1.4 1.4 0 0 1 1.4 1.4 V3.8 M2.6 4.2 L3.6 16.2 a1.8 1.8 0 0 0 1.8 1.6 H12.6 a1.8 1.8 0 0 0 1.8 -1.6 L15.4 4.2" fill="none" stroke="#4d535c" stroke-width="1.4" stroke-linecap="round"/><path d="M7.4 8.6 V12.8 M10.6 8.6 V12.8" stroke="#4d535c" stroke-width="1.5"/></svg>
<div class="tt" style="left:1862.25px;top:1012.24px;font-size:12px;color:#4d535c;letter-spacing:-0.317px;">Delete</div>
<div id="menu"></div>
<div class="abs" style="left:949px;top:274px;width:184px;height:36px;border-radius:5px;background:#f1f4f5"></div>
<div class="abs" style="left:949px;top:319px;width:184px;height:1px;background:#dfe2ea"></div>
<svg class="abs" style="left:962px;top:138.5px" width="18" height="18" viewBox="0 0 18 18"><rect x="0.4" y="0.4" width="11.4" height="11.4" rx="1.8" fill="#5d636d"/><rect x="6.2" y="6.2" width="11.4" height="11.4" rx="1.8" fill="#5d636d"/></svg>
<svg class="abs" style="left:962px;top:174.5px" width="18" height="18" viewBox="0 0 18 18"><rect x="6.2" y="6.2" width="11.4" height="11.4" rx="1.8" fill="#5d636d"/><rect x="0.9" y="0.9" width="10.6" height="10.6" rx="1.6" fill="#fff" stroke="#5d636d" stroke-width="1.1"/></svg>
<svg class="abs" style="left:962px;top:210.5px" width="18" height="18" viewBox="0 0 18 18"><rect x="0.9" y="0.9" width="10.6" height="10.6" rx="1.6" fill="none" stroke="#5d636d" stroke-width="1.1"/><rect x="6.6" y="6.6" width="10.6" height="10.6" rx="1.6" fill="none" stroke="#5d636d" stroke-width="1.1"/><rect x="6.2" y="6.2" width="5.6" height="5.6" fill="#5d636d"/></svg>
<svg class="abs" style="left:962px;top:246.5px" width="18" height="18" viewBox="0 0 18 18"><rect x="0.4" y="0.4" width="11.4" height="11.4" rx="1.8" fill="#5d636d"/><rect x="6.2" y="6.2" width="11.4" height="11.4" rx="1.8" fill="#5d636d"/><rect x="6.6" y="6.6" width="4.8" height="4.8" rx=".6" fill="#fff"/></svg>
<svg class="abs" style="left:962px;top:282.5px" width="18" height="18" viewBox="0 0 18 18"><rect x="0.4" y="6.4" width="11.2" height="11.2" rx="2" fill="#15181d"/><circle cx="12" cy="6" r="5.6" fill="#15181d"/><path d="M6.5 6.9 a5.6 5.6 0 0 0 4.8 4.6" fill="none" stroke="#f1f4f5" stroke-width="1.2"/><path d="M6.8 6.4 H9.6 a2 2 0 0 1 2 2 V11.2" fill="none" stroke="#f1f4f5" stroke-width="1"/></svg>
<svg class="abs" style="left:962px;top:338.5px" width="18" height="18" viewBox="0 0 18 18"><g transform="rotate(45 9 9)"><rect x="-0.5" y="5.7" width="19" height="6.6" rx="2" fill="#c6cbd4"/><rect x="5.7" y="-0.5" width="6.6" height="19" rx="2" fill="#fff" stroke="#c6cbd4" stroke-width="1"/><rect x="5.7" y="5.7" width="6.6" height="6.6" fill="#fff" stroke="#c6cbd4" stroke-width="1"/></g></svg>
<svg class="abs" style="left:962px;top:374.5px" width="18" height="18" viewBox="0 0 18 18"><rect x="0.9" y="0.9" width="6.8" height="16.2" fill="none" stroke="#c6cbd4" stroke-width="1.1"/><rect x="9" y="0.4" width="8.4" height="17.2" fill="#c6cbd4"/></svg>
<div class="tt" style="left:993.30px;top:143.15px;font-size:14px;color:#4d535c;letter-spacing:0.079px;">Unite</div>
<div class="tt" style="left:993.30px;top:179.15px;font-size:14px;color:#4d535c;letter-spacing:-0.162px;">Subtract</div>
<div class="tt" style="left:993.30px;top:215.15px;font-size:14px;color:#4d535c;letter-spacing:-0.044px;">Unite at Overlap</div>
<div class="tt" style="left:993.30px;top:251.15px;font-size:14px;color:#4d535c;letter-spacing:-0.089px;">Subtract at Overlap</div>
<div class="tt" style="left:993.30px;top:287.15px;font-size:14px;color:#23272e;letter-spacing:-0.711px;">Slice</div>
<div class="tt" style="left:993.30px;top:343.15px;font-size:14px;color:#c6cbd4;letter-spacing:-0.195px;">Subtract Crossover</div>
<div class="tt" style="left:993.30px;top:379.15px;font-size:14px;color:#c6cbd4;letter-spacing:-0.059px;">Split</div>
</div>
</body>
</html>
